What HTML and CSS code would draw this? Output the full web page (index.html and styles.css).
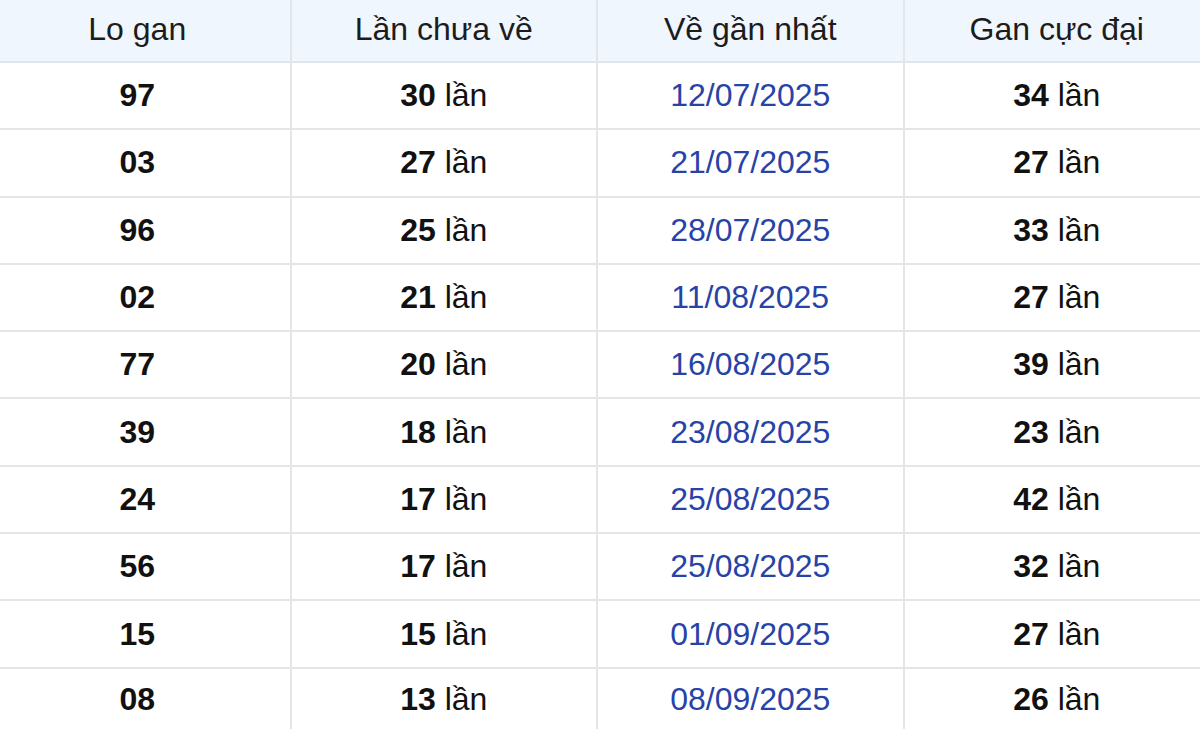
FILE: index.html
```html
<!DOCTYPE html>
<html lang="vi">
<head>
<meta charset="utf-8">
<title>Lo gan</title>
<link rel="stylesheet" href="styles.css">
</head>
<body>
<div class="wrap">
<table class="gan">
<thead>
<tr><th>Lo gan</th><th>Lần chưa về</th><th>Về gần nhất</th><th>Gan cực đại</th></tr>
</thead>
<tbody>
<tr><td class="num">97</td><td><b>30</b> lần</td><td class="date">12/07/2025</td><td><b>34</b> lần</td></tr>
<tr><td class="num">03</td><td><b>27</b> lần</td><td class="date">21/07/2025</td><td><b>27</b> lần</td></tr>
<tr><td class="num">96</td><td><b>25</b> lần</td><td class="date">28/07/2025</td><td><b>33</b> lần</td></tr>
<tr><td class="num">02</td><td><b>21</b> lần</td><td class="date">11/08/2025</td><td><b>27</b> lần</td></tr>
<tr><td class="num">77</td><td><b>20</b> lần</td><td class="date">16/08/2025</td><td><b>39</b> lần</td></tr>
<tr><td class="num">39</td><td><b>18</b> lần</td><td class="date">23/08/2025</td><td><b>23</b> lần</td></tr>
<tr><td class="num">24</td><td><b>17</b> lần</td><td class="date">25/08/2025</td><td><b>42</b> lần</td></tr>
<tr><td class="num">56</td><td><b>17</b> lần</td><td class="date">25/08/2025</td><td><b>32</b> lần</td></tr>
<tr><td class="num">15</td><td><b>15</b> lần</td><td class="date">01/09/2025</td><td><b>27</b> lần</td></tr>
<tr><td class="num">08</td><td><b>13</b> lần</td><td class="date">08/09/2025</td><td><b>26</b> lần</td></tr>
</tbody>
</table>
</div>
</body>
</html>
```
FILE: styles.css
```css
html, body {
  margin: 0;
  padding: 0;
  background: #ffffff;
  overflow: hidden;
}
.wrap {
  margin-left: -17px;
  width: 1228px;
}
.gan {
  width: 1228px;
  border-collapse: collapse;
  table-layout: fixed;
  font-family: "Liberation Sans", Arial, sans-serif;
  font-size: 32px;
  color: #111111;
}
.gan th, .gan td {
  border: 2px solid #e3e5e8;
  text-align: center;
  padding: 0;
}
.gan thead tr {
  background: #f0f6fd;
}
.gan th {
  height: 59px;
  font-weight: normal;
  color: #1c1c1c;
  border-top: none;
  padding-bottom: 2px;
}
.gan td {
  height: 65.3px;
}
.gan tbody tr:last-child td {
  border-bottom: none;
  height: 58px;
  padding-top: 2px;
}
.num {
  font-weight: bold;
}
.date {
  color: #2743a8;
}
.gan b {
  font-weight: bold;
}
```
